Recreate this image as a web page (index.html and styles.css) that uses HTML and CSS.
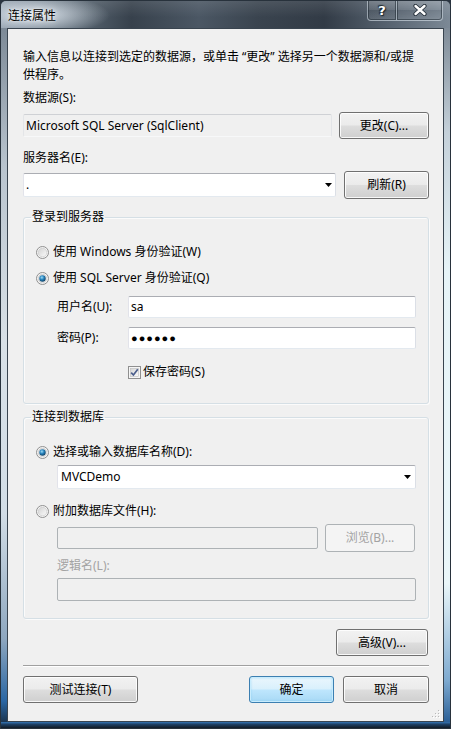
FILE: index.html
```html
<!DOCTYPE html>
<html lang="zh-CN">
<head>
<meta charset="utf-8">
<title>连接属性</title>
<link rel="stylesheet" href="styles.css">
</head>
<body>
<div class="window">
  <div class="titlebar">
    <span class="title">连接属性</span>
    <div class="caption-btns">
      <div class="cbtn help"><span>?</span></div>
      <div class="cbtn close">
        <svg width="14" height="12" viewBox="0 0 14 12"><path d="M2.5 2 L11.5 10 M11.5 2 L2.5 10" stroke="#27313b" stroke-width="4.2" stroke-linecap="round"/><path d="M2.5 2 L11.5 10 M11.5 2 L2.5 10" stroke="#ffffff" stroke-width="2.4" stroke-linecap="round"/></svg>
      </div>
    </div>
  </div>
  <div class="frame-mid">
    <div class="frame-l"></div>
    <div class="client">
      <p class="desc">输入信息以连接到选定的数据源，或单击<span class="q">“更改”</span>选择另一个数据源和/或提<br>供程序。</p>
      <div class="label lbl-ds">数据源(S):</div>
      <div class="row row-ds">
        <div class="tb tb-readonly tb-ds">Microsoft SQL Server (SqlClient)</div>
        <div class="btn btn-change">更改(C)...</div>
      </div>
      <div class="label lbl-server">服务器名(E):</div>
      <div class="row row-server">
        <div class="tb combo tb-server"><span class="val">.</span><svg class="arrow" width="7" height="4" viewBox="0 0 7 4"><path d="M0 0H7L3.5 4Z" fill="#000"/></svg></div>
        <div class="btn btn-refresh">刷新(R)</div>
      </div>

      <fieldset class="group group-login">
        <legend>登录到服务器</legend>
        <div class="opt opt-first">
          <svg class="radio" width="13" height="13" viewBox="0 0 13 13"><defs><linearGradient id="rg1" x1="0" y1="0" x2="1" y2="1"><stop offset="0" stop-color="#d2d2d2"/><stop offset="1" stop-color="#fbfbfb"/></linearGradient></defs><circle cx="6.5" cy="6.5" r="6" fill="#f6f6f6" stroke="#8f8f8f"/><circle cx="6.5" cy="6.5" r="4.3" fill="url(#rg1)" stroke="#c4c4c4" stroke-width="0.6"/></svg>
          <span>使用 Windows 身份验证(W)</span>
        </div>
        <div class="opt opt-second">
          <svg class="radio" width="13" height="13" viewBox="0 0 13 13"><defs><linearGradient id="rg2" x1="0" y1="0" x2="1" y2="1"><stop offset="0" stop-color="#d2d2d2"/><stop offset="1" stop-color="#fbfbfb"/></linearGradient><radialGradient id="dot2" cx="0.4" cy="0.35" r="0.7"><stop offset="0" stop-color="#9fdcf5"/><stop offset="0.45" stop-color="#2a86c0"/><stop offset="1" stop-color="#0c3a5c"/></radialGradient></defs><circle cx="6.5" cy="6.5" r="6" fill="#f6f6f6" stroke="#8f8f8f"/><circle cx="6.5" cy="6.5" r="4.3" fill="url(#rg2)" stroke="#c4c4c4" stroke-width="0.6"/><circle cx="6.5" cy="6.5" r="3.2" fill="url(#dot2)"/></svg>
          <span>使用 SQL Server 身份验证(Q)</span>
        </div>
        <div class="field field-user">
          <span class="flabel">用户名(U):</span>
          <div class="tb tb-field">sa</div>
        </div>
        <div class="field field-pwd">
          <span class="flabel">密码(P):</span>
          <div class="tb tb-field"><span class="dots">●●●●●●</span></div>
        </div>
        <div class="check-row">
          <svg class="check" width="13" height="13" viewBox="0 0 13 13"><defs><linearGradient id="cg1" x1="0" y1="0" x2="1" y2="1"><stop offset="0" stop-color="#d6d6d6"/><stop offset="1" stop-color="#fbfbfb"/></linearGradient></defs><rect x="0.5" y="0.5" width="12" height="12" fill="#f6f6f6" stroke="#8f8f8f"/><rect x="2.5" y="2.5" width="8" height="8" fill="url(#cg1)" stroke="#bdbdbd" stroke-width="0.6"/><path d="M3.2 6.6 L5.4 9 L9.8 3.2" fill="none" stroke="#4b5e8c" stroke-width="1.7"/></svg>
          <span>保存密码(S)</span>
        </div>
      </fieldset>

      <fieldset class="group group-db">
        <legend>连接到数据库</legend>
        <div class="opt opt-first">
          <svg class="radio" width="13" height="13" viewBox="0 0 13 13"><defs><linearGradient id="rg3" x1="0" y1="0" x2="1" y2="1"><stop offset="0" stop-color="#d2d2d2"/><stop offset="1" stop-color="#fbfbfb"/></linearGradient><radialGradient id="dot3" cx="0.4" cy="0.35" r="0.7"><stop offset="0" stop-color="#9fdcf5"/><stop offset="0.45" stop-color="#2a86c0"/><stop offset="1" stop-color="#0c3a5c"/></radialGradient></defs><circle cx="6.5" cy="6.5" r="6" fill="#f6f6f6" stroke="#8f8f8f"/><circle cx="6.5" cy="6.5" r="4.3" fill="url(#rg3)" stroke="#c4c4c4" stroke-width="0.6"/><circle cx="6.5" cy="6.5" r="3.2" fill="url(#dot3)"/></svg>
          <span>选择或输入数据库名称(D):</span>
        </div>
        <div class="tb combo tb-db"><span class="val">MVCDemo</span><svg class="arrow" width="7" height="4" viewBox="0 0 7 4"><path d="M0 0H7L3.5 4Z" fill="#000"/></svg></div>
        <div class="opt opt-attach">
          <svg class="radio" width="13" height="13" viewBox="0 0 13 13"><defs><linearGradient id="rg4" x1="0" y1="0" x2="1" y2="1"><stop offset="0" stop-color="#d2d2d2"/><stop offset="1" stop-color="#fbfbfb"/></linearGradient></defs><circle cx="6.5" cy="6.5" r="6" fill="#f6f6f6" stroke="#8f8f8f"/><circle cx="6.5" cy="6.5" r="4.3" fill="url(#rg4)" stroke="#c4c4c4" stroke-width="0.6"/></svg>
          <span>附加数据库文件(H):</span>
        </div>
        <div class="file-row">
          <div class="tb tb-disabled tb-file"></div>
          <div class="btn btn-disabled btn-browse">浏览(B)...</div>
        </div>
        <div class="label label-disabled lbl-logical">逻辑名(L):</div>
        <div class="tb tb-disabled tb-logical"></div>
      </fieldset>

      <div class="adv-row">
        <div class="btn btn-adv">高级(V)...</div>
      </div>
      <div class="separator"></div>
      <div class="bottom-row">
        <div class="btn btn-test">测试连接(T)</div>
        <div class="ok-cancel">
          <div class="btn btn-default btn-ok">确定</div>
          <div class="btn btn-cancel">取消</div>
        </div>
      </div>
      <svg class="grip" width="9" height="9" viewBox="0 0 9 9">
        <rect x="7" y="1" width="1" height="1" fill="#fff"/><rect x="6" y="0" width="1" height="1" fill="#b8b8b8"/>
        <rect x="4" y="4" width="1" height="1" fill="#fff"/><rect x="3" y="3" width="1" height="1" fill="#b8b8b8"/>
        <rect x="7" y="4" width="1" height="1" fill="#fff"/><rect x="6" y="3" width="1" height="1" fill="#b8b8b8"/>
        <rect x="1" y="7" width="1" height="1" fill="#fff"/><rect x="0" y="6" width="1" height="1" fill="#b8b8b8"/>
        <rect x="4" y="7" width="1" height="1" fill="#fff"/><rect x="3" y="6" width="1" height="1" fill="#b8b8b8"/>
        <rect x="7" y="7" width="1" height="1" fill="#fff"/><rect x="6" y="6" width="1" height="1" fill="#b8b8b8"/>
      </svg>
    </div>
    <div class="frame-r"></div>
  </div>
  <div class="frame-b"></div>
</div>
</body>
</html>
```

FILE: styles.css
```css
* { box-sizing: border-box; }
html, body { margin: 0; padding: 0; }
body {
  width: 451px;
  height: 729px;
  overflow: hidden;
  background: #2a3440;
  font-family: "Noto Sans", "Noto Sans CJK SC", sans-serif;
  font-size: 12px;
  color: #000;
}

.window {
  width: 451px;
  height: 729px;
  display: flex;
  flex-direction: column;
  border: 1px solid #28323c;
  border-radius: 6px 6px 0 0;
  overflow: hidden;
  background: #5b6876;
}

/* ---------- title bar ---------- */
.titlebar {
  height: 27px;
  flex: none;
  display: flex;
  align-items: flex-start;
  background:
    radial-gradient(ellipse 75px 20px at 34px 14px, rgba(226,234,242,0.95), rgba(226,234,242,0) 100%),
    linear-gradient(180deg, rgba(255,255,255,0.10), rgba(255,255,255,0) 60%),
    linear-gradient(90deg, #8a98a6 0%, #5a6773 17%, #37414c 29%, #4b5764 44%, #3a444f 57%, #323b46 72%, #56626f 86%, #7c8996 100%);
}
.title {
  margin: 5px 0 0 7px;
  line-height: 18px;
  font-family: "Noto Sans CJK SC", sans-serif;
  font-size: 12px;
  color: #000;
  text-shadow: 0 0 6px rgba(255,255,255,0.9), 0 0 2px rgba(255,255,255,0.8);
}
.caption-btns {
  margin-left: auto;
  margin-right: 7px;
  margin-top: -1px;
  display: flex;
}
.cbtn {
  height: 21px;
  display: flex;
  align-items: center;
  justify-content: center;
  border: 1px solid rgba(210,220,230,0.55);
  border-top: none;
  box-shadow: inset 0 0 0 1px rgba(30,40,50,0.55);
  background: linear-gradient(180deg, rgba(255,255,255,0.18), rgba(255,255,255,0.06) 50%, rgba(0,0,0,0.05) 51%, rgba(255,255,255,0.12));
}
.help {
  width: 29px;
  border-radius: 0 0 0 4px;
  border-right: none;
}
.help span {
  font-family: "DejaVu Sans", sans-serif;
  font-weight: bold;
  font-size: 13px;
  line-height: 13px;
  color: #fff;
  text-shadow: 0 0 2px #1e2830, 1px 1px 1px #1e2830, -1px -1px 1px #1e2830;
}
.close {
  width: 47px;
  border-radius: 0 0 4px 0;
}

/* ---------- frame ---------- */
.frame-mid {
  flex: 1;
  display: flex;
}
.frame-l {
  width: 6px;
  background: linear-gradient(180deg, #7d8a97 0%, #b9c4ce 20%, #d8e0e6 45%, #d2dde6 70%, #8ea7bf 88%, #2a66a3 97%, #1b3550 100%);
}
.frame-r {
  width: 6px;
  background: linear-gradient(180deg, #7f8b97 0%, #c4d0d9 15%, #e6f3f7 35%, #eaf6f9 80%, #7eaad0 94%, #2b5f96 100%);
}
.frame-b {
  height: 6px;
  flex: none;
  background: linear-gradient(180deg, #3475b4 0%, #1d3f63 40%, #101a25 100%);
}

/* ---------- client ---------- */
.client {
  width: 437px;
  border: 1px solid #39444f;
  background: #f0f0f0;
  padding: 19px 14px 0 15px;
  display: flex;
  flex-direction: column;
  position: relative;
}
.desc {
  margin: 0;
  line-height: 18px;
  white-space: nowrap;
}
.desc .q { padding: 0 3px; }
.label {
  line-height: 18px;
}
.lbl-ds { margin-top: 5px; }
.lbl-server { margin-top: 10px; }
.label-disabled { color: #a3a3a3; }

.row {
  display: flex;
  align-items: center;
  justify-content: space-between;
}
.row-ds { height: 27px; margin-top: 5px; }
.row-server { height: 28px; margin-top: 4px; }

/* text boxes */
.tb {
  display: flex;
  align-items: center;
  background: #fff;
  border: 1px solid;
  border-color: #abadb3 #dbdfe6 #e3e9ef #e2e3ea;
  border-radius: 2px;
  padding: 0 2px;
  line-height: 18px;
  white-space: nowrap;
}
.tb-readonly {
  background: #f0f0f0;
  border-color: #cfd1d5 #e3e5e8 #f7f8f9 #e3e5e8;
}
.tb-disabled {
  background: #f0f0f0;
  border-color: #adb2b5;
}
.tb-ds { width: 309px; height: 23px; }
.combo { padding-right: 3px; }
.combo .val { flex: 1; }
.tb-server { width: 313px; height: 24px; }

/* buttons */
.btn {
  display: flex;
  align-items: center;
  justify-content: center;
  height: 27px;
  border: 1px solid #707070;
  border-radius: 3px;
  background: linear-gradient(180deg, #f2f2f2 0%, #ebebeb 48%, #dddddd 52%, #cfcfcf 100%);
  box-shadow: inset 0 0 0 1px rgba(255,255,255,0.85);
  line-height: 18px;
  white-space: nowrap;
}
.btn-default {
  border-color: #3c7fb1;
  background: linear-gradient(180deg, #eaf6fd 0%, #d9f0fc 48%, #bee6fd 52%, #a7d9f5 100%);
  box-shadow: inset 0 0 0 1px #c8ecfd, inset 0 0 2px 1px rgba(90,190,240,0.45);
}
.btn-disabled {
  border-color: #adb2b5;
  background: #f4f4f4;
  box-shadow: none;
  color: #a3a3a3;
}
.btn-change { width: 90px; }
.btn-refresh { width: 85px; height: 28px; }

/* group boxes */
.group {
  margin: 0;
  padding: 0 12px 0 12px;
  min-width: 0;
  border: 1px solid #d5dfe5;
  border-radius: 3px;
  box-shadow: 1px 1px 0 #fbfbfb, inset 1px 1px 0 #fbfbfb;
  display: flex;
  flex-direction: column;
}
.group legend {
  margin-left: -5px;
  padding: 0 1px;
  line-height: 18px;
  font-size: 12px;
}
.group-login {
  margin-top: 9px;
  padding-bottom: 22px;
}
.group-db {
  margin-top: 4px;
  padding-bottom: 17px;
}

.opt {
  display: flex;
  align-items: center;
  gap: 4px;
  height: 18px;
  line-height: 18px;
}
.opt-first { margin-top: 17px; }
.opt-second { margin-top: 8px; }
.opt-attach { margin-top: 13px; }
.radio, .check { flex: none; display: block; }

.field {
  display: flex;
  align-items: center;
  padding-left: 21px;
  height: 22px;
}
.field-user { margin-top: 9px; }
.field-pwd { margin-top: 9px; }
.flabel { width: 71px; line-height: 18px; }
.tb-field { width: 288px; height: 22px; }
.dots {
  font-family: "Liberation Sans", sans-serif;
  font-size: 11px;
  letter-spacing: 1px;
  line-height: 14px;
}

.check-row {
  display: flex;
  align-items: center;
  gap: 2px;
  height: 18px;
  margin-top: 14px;
  padding-left: 92px;
  line-height: 18px;
}

.tb-db {
  margin-top: 4px;
  margin-left: 21px;
  width: 359px;
  height: 24px;
  padding-left: 3px;
  padding-right: 4px;
}
.file-row {
  display: flex;
  align-items: center;
  gap: 7px;
  height: 28px;
  margin-top: 4px;
  padding-left: 21px;
}
.tb-file { width: 261px; height: 22px; }
.btn-browse { width: 90px; height: 28px; }
.lbl-logical { margin-top: 5px; padding-left: 21px; }
.tb-logical {
  margin-top: 3px;
  margin-left: 21px;
  width: 359px;
  height: 23px;
}

/* bottom */
.adv-row {
  display: flex;
  justify-content: flex-end;
  margin-top: 10px;
  padding-right: 1px;
}
.btn-adv { width: 92px; }
.separator {
  margin-top: 9px;
  height: 2px;
  border-top: 1px solid #a0a0a0;
  border-bottom: 1px solid #ffffff;
}
.bottom-row {
  display: flex;
  justify-content: space-between;
  margin-top: 9px;
}
.btn-test { width: 115px; }
.ok-cancel {
  display: flex;
  gap: 9px;
}
.btn-ok { width: 85px; }
.btn-cancel { width: 86px; }

.grip {
  position: absolute;
  right: 2px;
  bottom: 2px;
}
```
